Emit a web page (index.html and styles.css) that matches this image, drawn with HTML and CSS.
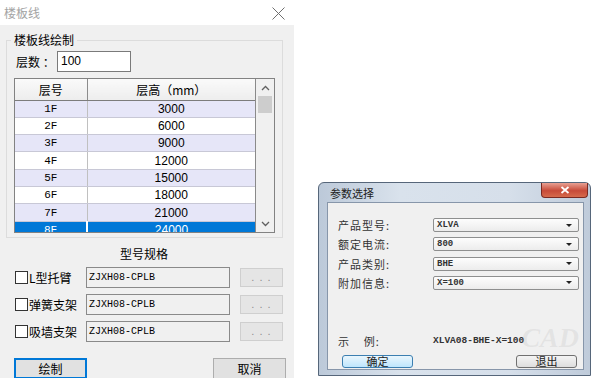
FILE: index.html
```html
<!DOCTYPE html>
<html lang="zh-CN">
  <head>
    <meta charset="UTF-8" />
    <title>楼板线</title>
    <link rel="stylesheet" href="styles.css">
  </head>

  <body>
    <div class="desktop">
      <!-- 楼板线 dialog -->
      <div class="win floor-win">
        <div class="titlebar">
          <span class="title">楼板线</span>
          <svg class="close-x" width="13" height="13" viewBox="0 0 13 13">
            <path d="M0.5 0.5 L12.5 12.5 M12.5 0.5 L0.5 12.5" stroke="#6e6e6e" stroke-width="1" fill="none" />
          </svg>
        </div>

        <div class="client">
          <fieldset class="group">
            <legend>楼板线绘制</legend>
            <div class="count-row">
              <span class="count-label">层数 ：</span>
              <div class="count-input">100</div>
            </div>

            <div class="grid">
              <div class="grid-body">
                <table class="floor-table">
                  <thead>
                    <tr><th class="col-no">层号</th><th>层高（mm）</th></tr>
                  </thead>
                  <tbody>
                    <tr class="odd"><td class="col-no">1F</td><td>3000</td></tr>
                    <tr><td class="col-no">2F</td><td>6000</td></tr>
                    <tr class="odd"><td class="col-no">3F</td><td>9000</td></tr>
                    <tr><td class="col-no">4F</td><td>12000</td></tr>
                    <tr class="odd"><td class="col-no">5F</td><td>15000</td></tr>
                    <tr><td class="col-no">6F</td><td>18000</td></tr>
                    <tr class="odd"><td class="col-no">7F</td><td>21000</td></tr>
                    <tr class="selected"><td class="col-no">8F</td><td>24000</td></tr>
                  </tbody>
                </table>
              </div>
              <div class="vscroll">
                <div class="arrow">
                  <svg width="9" height="6" viewBox="0 0 9 6"><path d="M1 5 L4.5 1.5 L8 5" stroke="#606060" stroke-width="1.3" fill="none" /></svg>
                </div>
                <div class="thumb"></div>
                <div class="track"></div>
                <div class="arrow">
                  <svg width="9" height="6" viewBox="0 0 9 6"><path d="M1 1 L4.5 4.5 L8 1" stroke="#606060" stroke-width="1.3" fill="none" /></svg>
                </div>
              </div>
            </div>
          </fieldset>

          <div class="spec-title">型号规格</div>

          <div class="spec-list">
            <div class="spec-row">
              <span class="chk"></span>
              <span class="spec-label">L型托臂</span>
              <div class="spec-field">ZJXH08-CPLB</div>
              <div class="dots-btn">. . .</div>
            </div>
            <div class="spec-row">
              <span class="chk"></span>
              <span class="spec-label">弹簧支架</span>
              <div class="spec-field">ZJXH08-CPLB</div>
              <div class="dots-btn">. . .</div>
            </div>
            <div class="spec-row">
              <span class="chk"></span>
              <span class="spec-label">吸墙支架</span>
              <div class="spec-field">ZJXH08-CPLB</div>
              <div class="dots-btn">. . .</div>
            </div>
          </div>

          <div class="actions">
            <button class="btn btn-default">绘制</button>
            <button class="btn">取消</button>
          </div>
        </div>
      </div>

      <!-- 参数选择 dialog -->
      <div class="win param-win">
        <div class="param-titlebar">
          <span class="param-title">参数选择</span>
          <div class="red-close">
            <svg width="10" height="8" viewBox="0 0 10 8"><path d="M1.5 1 L8.5 7 M8.5 1 L1.5 7" stroke="#fff" stroke-width="1.8" fill="none" /></svg>
          </div>
        </div>
        <div class="param-client">
          <div class="watermark">CAD</div>

          <div class="param-form">
            <span class="param-label">产品型号:</span>
            <div class="combo"><span class="combo-text">XLVA</span><span class="combo-arrow"></span></div>
            <span class="param-label">额定电流:</span>
            <div class="combo"><span class="combo-text">800</span><span class="combo-arrow"></span></div>
            <span class="param-label">产品类别:</span>
            <div class="combo"><span class="combo-text">BHE</span><span class="combo-arrow"></span></div>
            <span class="param-label">附加信息:</span>
            <div class="combo"><span class="combo-text">X=100</span><span class="combo-arrow"></span></div>
          </div>

          <div class="example-row">
            <span class="param-label example-label">示    例:</span>
            <span class="example-value">XLVA08-BHE-X=100</span>
          </div>

          <div class="param-actions">
            <button class="w7-btn w7-focus">确定</button>
            <button class="w7-btn w7-exit">退出</button>
          </div>
        </div>
      </div>
    </div>
  </body>
</html>
```

FILE: styles.css
```css
body {
  margin: 0;
  background: #fff;
  font-family: "Noto Sans CJK SC", "Liberation Sans", sans-serif;
  font-size: 12px;
  color: #000;
}

.desktop {
  position: relative;
  width: 598px;
  height: 378px;
  overflow: hidden;
}

/* ---------- 楼板线 ---------- */
.floor-win {
  position: absolute;
  left: 0;
  top: 0;
  width: 294px;
  height: 378px;
  display: flex;
  flex-direction: column;
  overflow: hidden;
}

.titlebar {
  height: 25px;
  flex: none;
  background: #fff;
  display: flex;
  align-items: center;
  justify-content: space-between;
  padding: 0 9px 0 4px;
  box-sizing: border-box;
}

.title {
  color: #a3a3a3;
  font-size: 12px;
  line-height: 16px;
}

.close-x {
  margin-top: 1px;
}

.client {
  flex: 1;
  background: #f0f0f0;
}

.group {
  margin: 7px 11px 0 6px;
  padding: 0 7px 4px 7px;
  border: 1px solid #dcdcdc;
  min-width: 0;
}

.group legend {
  padding: 0 3px;
  margin-left: -3px;
  font-size: 12px;
  line-height: 16px;
}

.count-row {
  display: flex;
  align-items: center;
  margin-top: 3px;
  height: 21px;
}

.count-label {
  width: 43px;
  padding-left: 2px;
  box-sizing: border-box;
  line-height: 16px;
}

.count-input {
  width: 74px;
  height: 21px;
  box-sizing: border-box;
  border: 1px solid #7a7a7a;
  background: #fff;
  padding-left: 3px;
  font-family: "Liberation Sans", sans-serif;
  font-size: 12px;
  line-height: 19px;
}

.grid {
  margin-top: 6px;
  height: 155px;
  box-sizing: border-box;
  border: 1px solid #828282;
  display: flex;
}

.grid-body {
  flex: 1;
  overflow: hidden;
  background: #fff;
  border-right: 1px solid #8a8a8a;
}

.floor-table {
  width: 100%;
  border-collapse: collapse;
  table-layout: fixed;
}

.floor-table th {
  height: 21px;
  padding: 0;
  box-sizing: border-box;
  background: linear-gradient(#fafafa, #ededed);
  border-bottom: 1px solid #7c7c7c;
  font-weight: normal;
  font-size: 12px;
  text-align: center;
}

.floor-table th.col-no {
  width: 72px;
  border-right: 1px solid #8c8c8c;
}

.floor-table td {
  height: 17.33px;
  padding: 0;
  box-sizing: border-box;
  border-bottom: 1px solid #c8c8d6;
  text-align: center;
  font-family: "Liberation Sans", sans-serif;
  font-size: 12px;
  line-height: 16px;
}

.floor-table td.col-no {
  border-right: 1px solid #c0c0c0;
  font-family: "Liberation Mono", monospace;
  font-size: 11px;
}

.floor-table tr.odd td {
  background: #e6e6f8;
}

.floor-table tr.selected td {
  background: #0078d7;
  color: #fff;
}

.floor-table tr.selected td.col-no {
  border-right: 2px solid #fff;
}

.vscroll {
  width: 18px;
  background: #f0f0f0;
  display: flex;
  flex-direction: column;
}

.vscroll .arrow {
  height: 17px;
  display: flex;
  align-items: center;
  justify-content: center;
}

.vscroll .thumb {
  height: 17px;
  margin: 0 2px;
  background: #cdcdcd;
}

.vscroll .track {
  flex: 1;
}

.spec-title {
  margin-top: 8px;
  padding-right: 6px;
  line-height: 16px;
  text-align: center;
}

.spec-list {
  display: flex;
  flex-direction: column;
  gap: 6px;
  margin-top: 5px;
  padding-left: 15px;
}

.spec-row {
  display: flex;
  align-items: center;
  height: 21px;
}

.chk {
  width: 13px;
  height: 13px;
  box-sizing: border-box;
  border: 1px solid #333;
  background: #fff;
}

.spec-label {
  width: 58px;
  padding-left: 1px;
  box-sizing: border-box;
  line-height: 16px;
}

.spec-field {
  width: 144px;
  height: 21px;
  box-sizing: border-box;
  border: 1px solid #8a8a8a;
  background: #f0f0f0;
  padding-left: 2px;
  font-family: "Liberation Mono", monospace;
  font-size: 10px;
  line-height: 19px;
}

.dots-btn {
  width: 43px;
  height: 19px;
  margin-left: 10px;
  box-sizing: border-box;
  border: 1px solid #cfcfcf;
  background: #e5e5e5;
  color: #8f8f8f;
  text-align: center;
  font-family: "Liberation Sans", sans-serif;
  font-size: 11px;
  letter-spacing: 1px;
  line-height: 17px;
}

.actions {
  display: flex;
  justify-content: space-between;
  margin-top: 16px;
  padding: 0 8px 0 14px;
}

.btn {
  width: 73px;
  height: 21px;
  box-sizing: border-box;
  border: 1px solid #adadad;
  background: #e1e1e1;
  font-family: "Noto Sans CJK SC", sans-serif;
  font-size: 12px;
  line-height: 16px;
  padding: 0;
  color: #000;
}

.btn-default {
  border: 2px solid #0078d7;
}

/* ---------- 参数选择 ---------- */
.param-win {
  position: absolute;
  left: 318px;
  top: 182px;
  width: 273px;
  height: 194px;
  box-sizing: border-box;
  border: 1px solid #56667a;
  border-radius: 6px 6px 0 0;
  background: linear-gradient(90deg, #bcc9d9, #d9e2ec 30%, #d6dfea 70%, #bfcbda);
  display: flex;
  flex-direction: column;
}

.param-titlebar {
  height: 19px;
  display: flex;
  align-items: center;
  padding-left: 11px;
}

.param-title {
  font-size: 11px;
  color: #222;
}

.red-close {
  margin-left: auto;
  margin-right: 2px;
  align-self: flex-start;
  width: 45px;
  height: 14px;
  border: 1px solid #7a2a22;
  border-top: none;
  border-radius: 0 0 4px 4px;
  background: linear-gradient(#e8a093, #c74a38 55%, #d66a4c);
  display: flex;
  align-items: center;
  justify-content: center;
}

.param-client {
  position: relative;
  flex: 1;
  margin: 0 6px 5px 8px;
  border: 1px solid #8796aa;
  background: #f0f0f0;
  color: #333;
}

.param-form {
  display: grid;
  grid-template-columns: 95px 146px;
  grid-auto-rows: 14px;
  row-gap: 5.33px;
  align-items: center;
  padding: 15px 0 0 10px;
}

.param-label {
  font-size: 11px;
  letter-spacing: 1px;
  line-height: 14px;
  color: #333;
}

.combo {
  height: 14px;
  box-sizing: border-box;
  border: 1px solid #8e8f8f;
  border-radius: 2px;
  background: linear-gradient(#fdfdfd, #ececec);
  display: flex;
  align-items: center;
  justify-content: space-between;
  padding: 0 6px 0 3px;
}

.combo-text {
  font-family: "Liberation Mono", monospace;
  font-weight: bold;
  font-size: 9px;
  color: #333;
}

.combo-arrow {
  width: 0;
  height: 0;
  border-left: 3.5px solid transparent;
  border-right: 3.5px solid transparent;
  border-top: 3.5px solid #222;
}

.example-row {
  display: flex;
  align-items: center;
  margin-top: 44px;
  padding-left: 10px;
  height: 14px;
}

.example-label {
  width: 95px;
  white-space: pre;
}

.example-value {
  font-family: "Liberation Mono", monospace;
  font-size: 9.5px;
  font-weight: bold;
  color: #333;
}

.param-actions {
  display: flex;
  justify-content: space-between;
  margin-top: 7px;
  padding: 0 6px 0 14px;
}

.w7-btn {
  height: 13px;
  padding: 0;
  box-sizing: border-box;
  border: 1px solid #707070;
  border-radius: 3px;
  background: linear-gradient(#f4f4f4, #dedede);
  font-family: "Noto Sans CJK SC", sans-serif;
  font-size: 11px;
  line-height: 11px;
  color: #222;
}

.w7-focus {
  width: 71px;
  border-color: #3c7fb1;
  background: linear-gradient(#eaf6fd, #bee6fd);
}

.w7-exit {
  width: 61px;
}

.watermark {
  position: absolute;
  right: 4px;
  top: 120px;
  font-family: "Liberation Serif", serif;
  font-style: italic;
  font-weight: bold;
  font-size: 28px;
  line-height: 30px;
  color: rgba(160, 160, 160, 0.16);
}
```
